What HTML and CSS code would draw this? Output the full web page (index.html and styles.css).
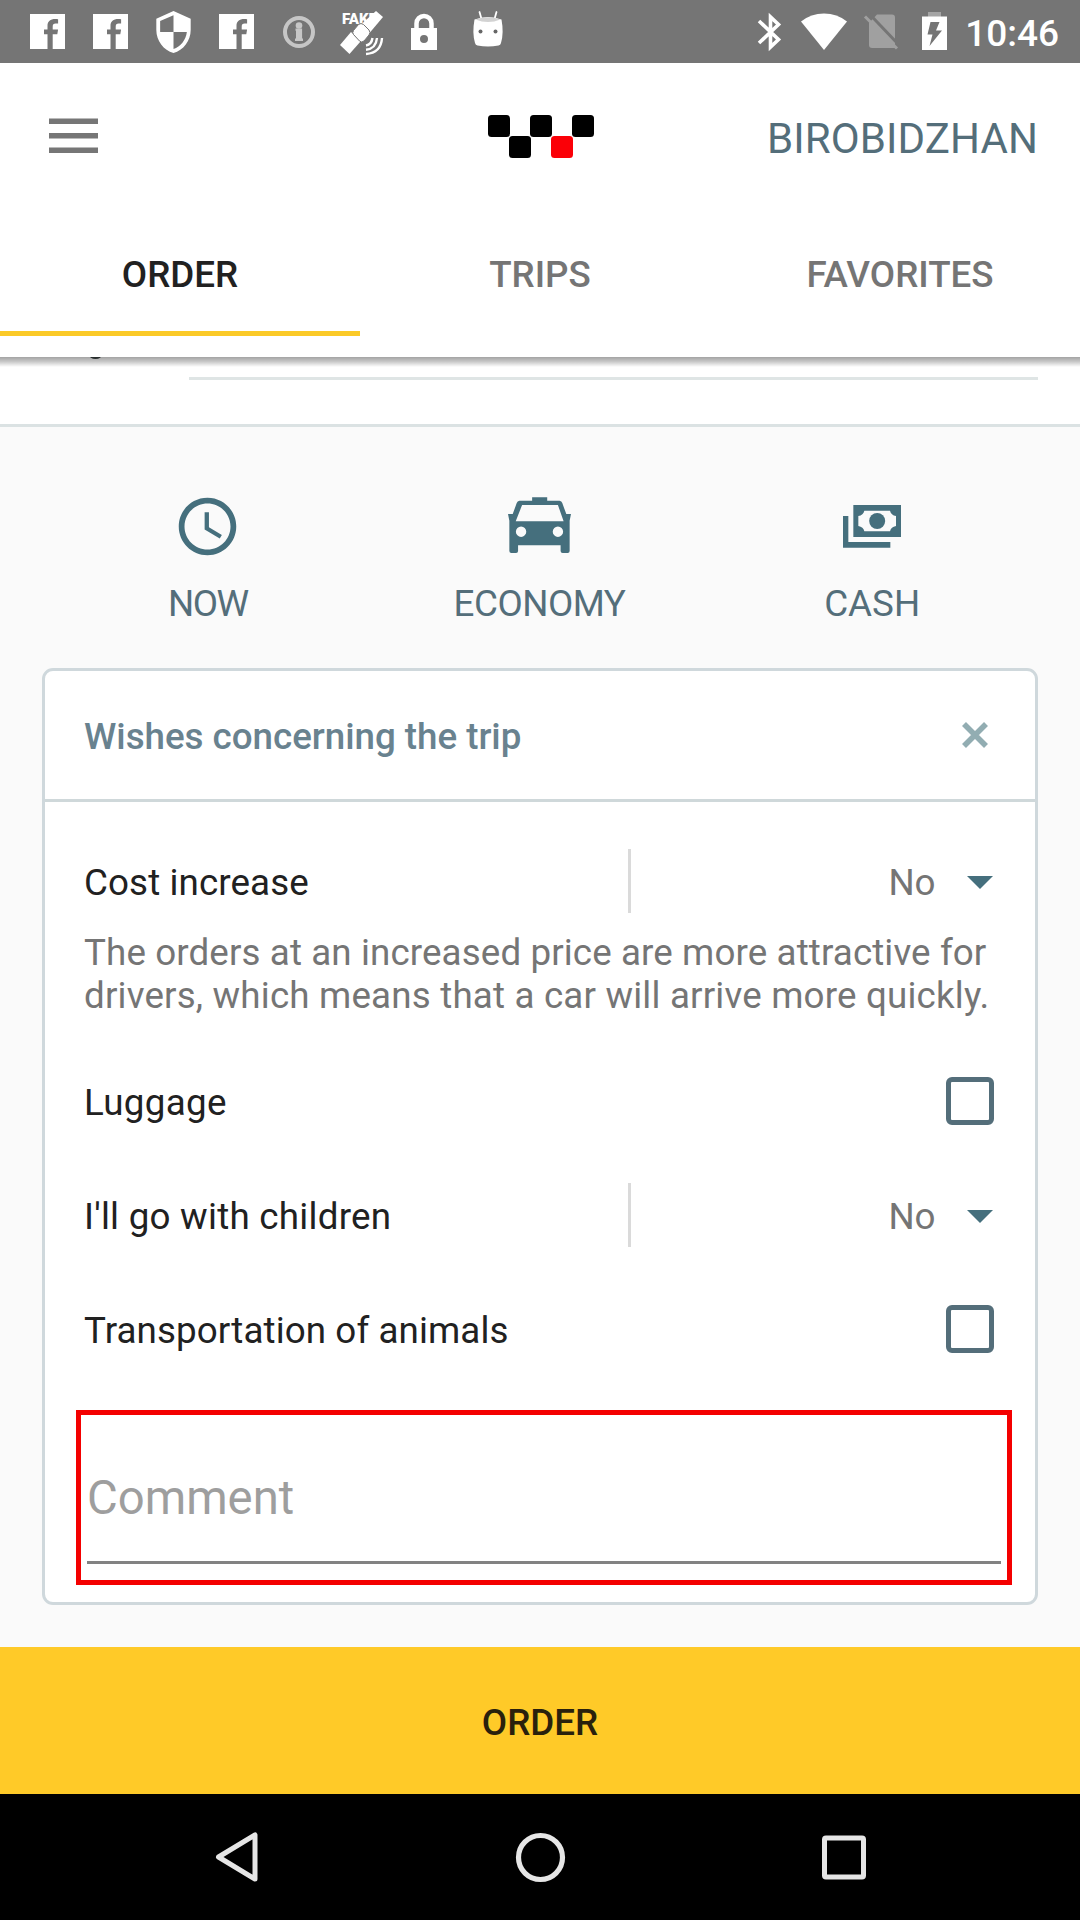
FILE: index.html
```
<!DOCTYPE html>
<html lang="en">
<head>
<meta charset="utf-8">
<title>Order</title>
<link rel="stylesheet" href="styles.css">
</head>
<body>
<div class="screen">
  <div class="status-bar">
    <svg class="st-fb" width="35" height="35" viewBox="0 0 35 35"><path fill="#fff" d="M0 0h35v35h-12.3v-14.8h4.6l.8-4.7h-5.4v-2.7c0-2 .8-3.2 3-3.2h2.4V5.2c-6.600-1-10.600 1.300-10.600 6.500v3.800h-3.500v4.700h3.500V35H0z"/></svg>
    <svg class="st-fb" width="35" height="35" viewBox="0 0 35 35"><path fill="#fff" d="M0 0h35v35h-12.3v-14.8h4.6l.8-4.7h-5.4v-2.7c0-2 .8-3.2 3-3.2h2.4V5.2c-6.600-1-10.600 1.300-10.600 6.500v3.800h-3.500v4.700h3.500V35H0z"/></svg>
    <svg class="st-shield" width="35" height="42" viewBox="3 1 18 22"><path fill="#fff" d="M12 1L3 5v6c0 5.55 3.84 10.74 9 12 5.16-1.260 9-6.450 9-12V5l-9-4zm0 10.990h7c-.53 4.120-3.280 7.790-7 8.940V12H5V6.300l7-3.110v8.800z"/></svg>
    <svg class="st-fb" width="35" height="35" viewBox="0 0 35 35"><path fill="#fff" d="M0 0h35v35h-12.3v-14.8h4.6l.8-4.7h-5.4v-2.7c0-2 .8-3.2 3-3.2h2.4V5.2c-6.600-1-10.600 1.300-10.600 6.500v3.800h-3.500v4.700h3.500V35H0z"/></svg>
    <svg class="st-info" width="32" height="32" viewBox="0 0 32 32"><circle cx="16" cy="16" r="14" fill="none" stroke="#c6c6c6" stroke-width="4"/><circle cx="16" cy="9.500" r="3.300" fill="#c6c6c6"/><path fill="#c6c6c6" d="M12.500 12.500h6.600v10h.9v2.500h-8v-2.500h1v-7.800h-.5z"/></svg>
    <svg class="st-sat" width="44" height="44" viewBox="0 0 44 44">
      <text class="fake" x="2" y="11.500">FAKE</text>
      <g fill="#fff"><path d="M36-1l7 6-13.500 16-9-8z"/><path d="M11 20l9.500 9.500L9.500 42 0 33z"/><path d="M18.500 12.500q2.500-2 5 0l5.500 5.500q2 2.500 0 5l-5 6q-2.500 2-4.500 0l-6-6.500q-1.500-2 0-4z" stroke="#757575"/></g>
      <g fill="none" stroke="#fff" stroke-width="2.400"><path d="M26 33.500q5.500-1 6.500-7.500M26 37.700q10-1 11-11.700M26 42q15-1 16-16"/></g>
    </svg>
    <svg class="st-lock" width="26" height="36" viewBox="0 0 26 36"><path fill="none" stroke="#fff" stroke-width="4.500" d="M5.500 16V9.500a7.500 7.500 0 0 1 15 0V16"/><path fill="#fff" fill-rule="evenodd" d="M0 14h26v22H0zM13 21a4 4 0 1 0 0 8 4 4 0 0 0 0-8z"/></svg>
    <svg class="st-droid" width="30" height="36" viewBox="0 0 30 36"><path stroke="#fff" stroke-width="1.800" stroke-linecap="round" d="M6.500 1l2 7M23.500 1l-2 7"/><path fill="#fff" d="M1.500 8.500Q15 3.500 28.500 8.500 31 22 28 32q-.5 2-2.500 2.500-10.500 2-21 0Q2.500 34 2 32-1 22 1.500 8.500z"/><path fill="#d2d2d2" d="M2.500 8.500Q15 4 27.500 8.500 15 13.500 2.500 8.500z"/><circle cx="7.500" cy="20.500" r="2" fill="#666"/><circle cx="22.500" cy="20.500" r="2" fill="#666"/></svg>
    <div class="st-right">
      <svg class="st-bt" width="24" height="38" viewBox="0 0 24 38"><path fill="none" stroke="#fff" stroke-width="3.600" d="M1 8l19.500 18.500-8 7.500V4l8 7.500L1 30"/></svg>
      <svg class="st-wifi" width="46" height="37" viewBox="0 0 46 37"><path fill="#fff" d="M0 8.500Q10 .5 23 .5t23 8L23 37z"/></svg>
      <svg class="st-sim" width="35" height="36" viewBox="0 0 35 36"><path fill="#a0a0a0" d="M13 .5h15q3 0 3 3V34H8q-3 0-3-3V9z"/><path stroke="#757575" stroke-width="3" d="M4-1.500L35 31"/><path stroke="#a0a0a0" stroke-width="3" d="M1 2.500l32 32"/></svg>
      <svg class="st-bat" width="25" height="38" viewBox="0 0 25 38"><path fill="#a5a5a5" d="M6 0h13v5H6z"/><path fill="#fff" fill-rule="evenodd" d="M0 4.500h25V38H0zM8.500 10L5.500 22.500h5L7.500 34 20 18.500h-6L17.500 10z"/></svg>
      <span class="clock">10:46</span>
    </div>
  </div>

  <header class="header">
    <div class="toolbar">
      <svg class="menu" width="50" height="36" viewBox="0 0 50 36"><path fill="#767676" d="M0 .500h49v5.500H0zM0 15h49v5.500H0zM0 29.500h49v5.500H0z"/></svg>
      <svg class="logo" width="106" height="43" viewBox="0 0 106 43"><g fill="#000"><rect width="22" height="22" rx="3.500"/><rect x="42" width="22" height="22" rx="3.500"/><rect x="84" width="22" height="22" rx="3.500"/><rect x="21" y="21" width="22" height="22" rx="3.500"/></g><rect x="63" y="21" width="22" height="22" rx="3.500" fill="#fb0007"/></svg>
      <span class="city">BIROBIDZHAN</span>
    </div>
    <nav class="tabs">
      <div class="tab active">ORDER</div>
      <div class="tab">TRIPS</div>
      <div class="tab">FAVORITES</div>
    </nav>
  </header>

  <main class="content">
    <div class="field"><span class="descender"></span><div class="field-line"></div></div>
    <div class="options">
      <div class="option">
        <svg width="69" height="69" viewBox="0 0 24 24"><path fill="#456f7d" d="M11.990 2C6.470 2 2 6.480 2 12s4.470 10 9.990 10C17.520 22 22 17.520 22 12S17.520 2 11.990 2zM12 20c-4.420 0-8-3.580-8-8s3.580-8 8-8 8 3.580 8 8-3.580 8-8 8zM12.500 7H11v6l5.250 3.150.75-1.230-4.500-2.670z"/></svg>
        <span class="now">NOW</span>
      </div>
      <div class="option">
        <svg width="63" height="69" viewBox="0 -16 188 206"><path fill="#456f7d" fill-rule="evenodd" d="M72 0h45v10h37q6 1 8 7l12 33h14l-4 20v90q0 6-6 6h-15q-6 0-6-6v-17H30v17q0 6-6 6H10q-6 0-6-6V70L0 50h14l12-33q2-6 8-7h38zM42 23L23 71h143l-17-48zM39 87a15.500 15.500 0 1 0 0 31 15.500 15.500 0 0 0 0-31zM149 87a15.500 15.500 0 1 0 0 31 15.500 15.500 0 0 0 0-31z"/></svg>
        <span class="economy">ECONOMY</span>
      </div>
      <div class="option cash">
        <svg width="58" height="69" viewBox="0 -39 174 207"><path fill="#456f7d" fill-rule="evenodd" d="M31 0h143v96H31zM64 17q-3 13-18 16v30q15 3 18 16h77q3-13 18-16V33q-15-3-18-16zM0 33h16v78h126v17H0z"/><circle cx="102.500" cy="48" r="24" fill="#456f7d"/></svg>
        <span>CASH</span>
      </div>
    </div>

    <section class="card">
      <div class="card-head">
        <h2>Wishes concerning the trip</h2>
        <svg width="26" height="26" viewBox="0 0 26 26"><path stroke="#92adb2" stroke-width="5.600" d="M2 2l22 22M24 2L2 24"/></svg>
      </div>
      <div class="row">
        <span class="label cost">Cost increase</span>
        <span class="select"><span class="value">No</span><span class="arrow"></span></span>
      </div>
      <p class="hint"><span class="line1">The orders at an increased price are more attractive for</span><br><span class="line2">drivers, which means that a car will arrive more quickly.</span></p>
      <div class="row after-hint"><span class="label luggage">Luggage</span><span class="checkbox"></span></div>
      <div class="row spaced">
        <span class="label children">I'll go with children</span>
        <span class="select"><span class="value">No</span><span class="arrow"></span></span>
      </div>
      <div class="row spaced"><span class="label">Transportation of animals</span><span class="checkbox"></span></div>
      <div class="comment"><div class="comment-field">Comment</div></div>
    </section>
  </main>

  <div class="order-button">ORDER</div>

  <div class="nav-bar">
    <svg width="46" height="52" viewBox="0 0 46 52"><path fill="none" stroke="#e6e6e6" stroke-width="5" stroke-linejoin="round" d="M41 4v44L4.500 26z"/></svg>
    <svg width="50" height="50" viewBox="0 0 50 50"><circle cx="24.500" cy="25.500" r="22" fill="none" stroke="#e6e6e6" stroke-width="5.200"/></svg>
    <svg width="44" height="44" viewBox="0 0 44 44"><rect x="2.500" y="3" width="39" height="39" rx="1.500" fill="none" stroke="#e6e6e6" stroke-width="5"/></svg>
  </div>
</div>
</body>
</html>
```
FILE: styles.css
```
* { box-sizing: border-box; }
body {
  margin: 0;
  background: #fff;
  font-family: Roboto, "Liberation Sans", sans-serif;
  font-size: 36.75px;
  color: #212121;
}
svg { display: block; flex: none; overflow: visible; }
.screen {
  width: 1080px;
  height: 1920px;
  display: flex;
  flex-direction: column;
  overflow: hidden;
  background: #fafafa;
}

/* status bar */
.status-bar {
  height: 63px;
  flex: none;
  display: flex;
  align-items: center;
  padding: 0 21px 0 2px;
  background: #757575;
}
.st-fb { margin-left: 28px; }
.st-shield { margin-left: 28px; }
.st-info { margin-left: 29px; }
.st-sat { margin-left: 25px; margin-top: 4px; }
.st-lock { margin-left: 27px; }
.st-droid { margin-left: 36px; margin-top: -5px; }
.fake {
  font-family: Roboto, sans-serif;
  font-size: 15px;
  font-weight: 900;
  fill: #fff;
}
.st-right {
  margin-left: auto;
  display: flex;
  align-items: center;
  height: 100%;
}
.st-wifi { margin-left: 19px; margin-top: -1px; }
.st-sim { margin-left: 17px; }
.st-bat { margin-left: 23px; margin-top: -2px; }
.clock {
  margin-left: 18px;
  padding-top: 4px;
  font-size: 37px;
  line-height: 44px;
  font-weight: 500;
  color: #fff;
}

/* header */
.header {
  position: relative;
  z-index: 1;
  height: 294px;
  flex: none;
  background: #fff;
}
.header::after {
  content: "";
  position: absolute;
  left: 0;
  right: 0;
  top: 100%;
  height: 10px;
  background: linear-gradient(rgba(0, 0, 0, .36), rgba(0, 0, 0, .22) 45%, rgba(0, 0, 0, 0));
}
.toolbar {
  height: 147px;
  display: grid;
  grid-template-columns: 1fr 106px 1fr;
  align-items: center;
  padding: 0 42px 0 49px;
}
.menu { margin-bottom: 1px; }
.logo { margin-left: -2.5px; }
.city {
  justify-self: end;
  padding-top: 3px;
  font-size: 42px;
  letter-spacing: .1px;
  color: #546e7a;
}
.tabs {
  height: 126px;
  display: grid;
  grid-template-columns: repeat(3, 1fr);
}
.tab {
  display: flex;
  align-items: center;
  justify-content: center;
  padding-top: 3px;
  font-weight: 500;
  color: #757575;
}
.tab.active {
  padding-top: 8px;
  border-bottom: 5px solid #fbca28;
  color: #212121;
}

/* scrolled content */
.content { flex: none; height: 1290px; }
.field {
  position: relative;
  height: 70px;
  padding: 20px 42px 0 189px;
  background: #fff;
  border-bottom: 3px solid #dbe2e3;
}
.field-line { height: 3px; background: #dfe5e5; }
.descender {
  position: absolute;
  left: 89px;
  top: -6px;
  width: 13px;
  height: 8px;
  border-radius: 50%;
  background: #3c4444;
}
.options {
  height: 241px;
  padding: 65px 43px 0 42px;
  display: grid;
  grid-template-columns: repeat(3, 1fr);
}
.option {
  display: flex;
  flex-direction: column;
  align-items: center;
  gap: 21px;
  line-height: 44px;
  color: #546e7a;
}
.option.cash { padding-left: 2px; }
.now { letter-spacing: -1.4px; }
.economy { letter-spacing: -.5px; }

/* wishes card */
.card {
  margin: 0 42px;
  height: 937px;
  border: 3px solid #cfd8dc;
  border-radius: 11px;
  background: #fff;
}
.card-head {
  height: 131px;
  padding: 0 47px 0 39px;
  display: flex;
  align-items: center;
  justify-content: space-between;
  border-bottom: 3px solid #cfd8da;
}
.card-head h2 {
  margin: 0;
  padding-top: 3px;
  font-size: 36.75px;
  font-weight: 500;
  letter-spacing: -.03px;
  color: #69828f;
}
.row {
  height: 64px;
  margin: 47px 41px 0 39px;
  display: flex;
  justify-content: space-between;
  align-items: center;
}
.row.after-hint { margin-top: 52px; }
.row.spaced { margin-top: 50px; }
.label { padding-top: 3px; letter-spacing: .1px; }
.cost { letter-spacing: .1px; }
.luggage { letter-spacing: .3px; }
.children { letter-spacing: .25px; }
.select {
  width: 366px;
  height: 64px;
  display: flex;
  align-items: center;
  justify-content: flex-end;
  border-left: 3px solid #dadada;
}
.value { padding-top: 3px; color: #757575; letter-spacing: -.4px; }
.arrow {
  margin: 3px 1px 0 32px;
  border: 13px solid transparent;
  border-top-color: #456f7d;
  border-bottom-width: 0;
}
.hint {
  margin: 19px 0 0 39px;
  line-height: 42.5px;
  color: #757575;
  white-space: nowrap;
}
.line1 { letter-spacing: .11px; }
.line2 { letter-spacing: .18px; }
.checkbox {
  width: 48px;
  height: 48px;
  border: 5px solid #546e7a;
  border-radius: 6px;
}
.comment {
  margin: 49px 23px 0 31px;
  height: 175px;
  padding: 0 6px;
  border: 5px solid #f40000;
}
.comment-field {
  height: 149px;
  padding-top: 55px;
  font-size: 47.25px;
  line-height: 56px;
  color: #9e9e9e;
  border-bottom: 3px solid #828282;
}

.order-button {
  height: 147px;
  flex: none;
  display: flex;
  align-items: center;
  justify-content: center;
  padding-top: 3px;
  background: #ffca28;
  font-weight: 500;
  color: #2a210c;
}
.nav-bar {
  height: 126px;
  flex: none;
  display: flex;
  align-items: center;
  justify-content: space-between;
  padding: 0 214px;
  background: #000;
}
```
